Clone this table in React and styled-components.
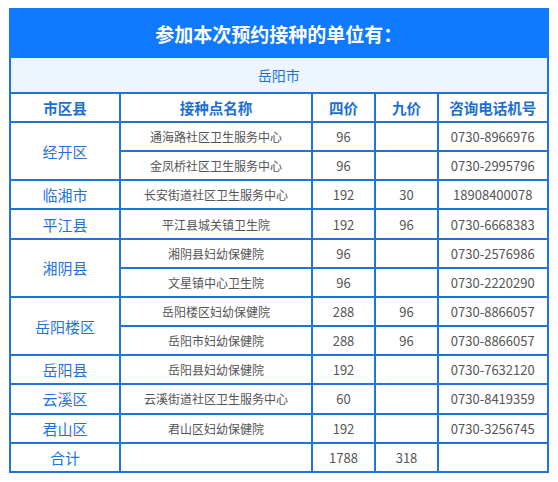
import React from 'react';
import styled, { createGlobalStyle } from 'styled-components';

const GlobalStyle = createGlobalStyle`
  body {
    margin: 0;
    background: #fff;
    font-family: "Noto Sans CJK SC", "Liberation Sans", sans-serif;
  }
`;

const rows = [
  { area: '经开区', span: 2, name: '通海路社区卫生服务中心', four: '96', nine: '', tel: '0730-8966976' },
  { name: '金凤桥社区卫生服务中心', four: '96', nine: '', tel: '0730-2995796' },
  { area: '临湘市', span: 1, name: '长安街道社区卫生服务中心', four: '192', nine: '30', tel: '18908400078' },
  { area: '平江县', span: 1, name: '平江县城关镇卫生院', four: '192', nine: '96', tel: '0730-6668383' },
  { area: '湘阴县', span: 2, name: '湘阴县妇幼保健院', four: '96', nine: '', tel: '0730-2576986' },
  { name: '文星镇中心卫生院', four: '96', nine: '', tel: '0730-2220290' },
  { area: '岳阳楼区', span: 2, name: '岳阳楼区妇幼保健院', four: '288', nine: '96', tel: '0730-8866057' },
  { name: '岳阳市妇幼保健院', four: '288', nine: '96', tel: '0730-8866057' },
  { area: '岳阳县', span: 1, name: '岳阳县妇幼保健院', four: '192', nine: '', tel: '0730-7632120' },
  { area: '云溪区', span: 1, name: '云溪街道社区卫生服务中心', four: '60', nine: '', tel: '0730-8419359' },
  { area: '君山区', span: 1, name: '君山区妇幼保健院', four: '192', nine: '', tel: '0730-3256745' },
];

const Page = styled.div`
  padding: 8px 0 0 9px;
`;

const Panel = styled.div`
  width: 539.5px;
`;

const TitleBar = styled.div`
  height: 50px;
  background: #0f79ff;
  color: #fff;
  font-size: 19px;
  font-weight: bold;
  display: flex;
  align-items: center;
  justify-content: center;
  letter-spacing: 0;
`;

const Table = styled.table`
  width: 100%;
  border-collapse: separate;
  border-spacing: 0;
  table-layout: fixed;
  border-left: 2px solid #1f74d7;
`;

const Cell = styled.td`
  box-sizing: border-box;
  height: ${p => p.$h || 29.17}px;
  padding: 0;
  border-right: 2px solid #1f74d7;
  border-bottom: 2px solid #1f74d7;
  text-align: center;
  vertical-align: middle;
  color: #555;
  font-size: 13px;
`;

const CityCell = styled(Cell)`
  background: #edf5ff;
  color: #1c72dc;
  font-size: 14px;
`;

const HeadCell = styled(Cell)`
  color: #1a6fd4;
  font-weight: bold;
  font-size: 14.5px;
`;

const AreaCell = styled(Cell)`
  color: #1f74dc;
  font-size: 15px;
`;

const NameCell = styled(Cell)`
  font-size: 12px;
`;

export default function App() {
  return (
    <Page>
      <GlobalStyle />
      <Panel>
        <TitleBar>参加本次预约接种的单位有：</TitleBar>
        <Table>
          <colgroup>
            <col style={{ width: 110 }} />
            <col style={{ width: 192 }} />
            <col style={{ width: 63 }} />
            <col style={{ width: 63 }} />
            <col />
          </colgroup>
          <tbody>
            <tr>
              <CityCell colSpan={5} $h={36}>岳阳市</CityCell>
            </tr>
            <tr>
              <HeadCell $h={29}>市区县</HeadCell>
              <HeadCell $h={29}>接种点名称</HeadCell>
              <HeadCell $h={29}>四价</HeadCell>
              <HeadCell $h={29}>九价</HeadCell>
              <HeadCell $h={29}>咨询电话机号</HeadCell>
            </tr>
            {rows.map((r, i) => (
              <tr key={i}>
                {r.area && <AreaCell rowSpan={r.span}>{r.area}</AreaCell>}
                <NameCell>{r.name}</NameCell>
                <Cell>{r.four}</Cell>
                <Cell>{r.nine}</Cell>
                <Cell>{r.tel}</Cell>
              </tr>
            ))}
            <tr>
              <AreaCell>合计</AreaCell>
              <Cell></Cell>
              <Cell>1788</Cell>
              <Cell>318</Cell>
              <Cell></Cell>
            </tr>
          </tbody>
        </Table>
      </Panel>
    </Page>
  );
}
